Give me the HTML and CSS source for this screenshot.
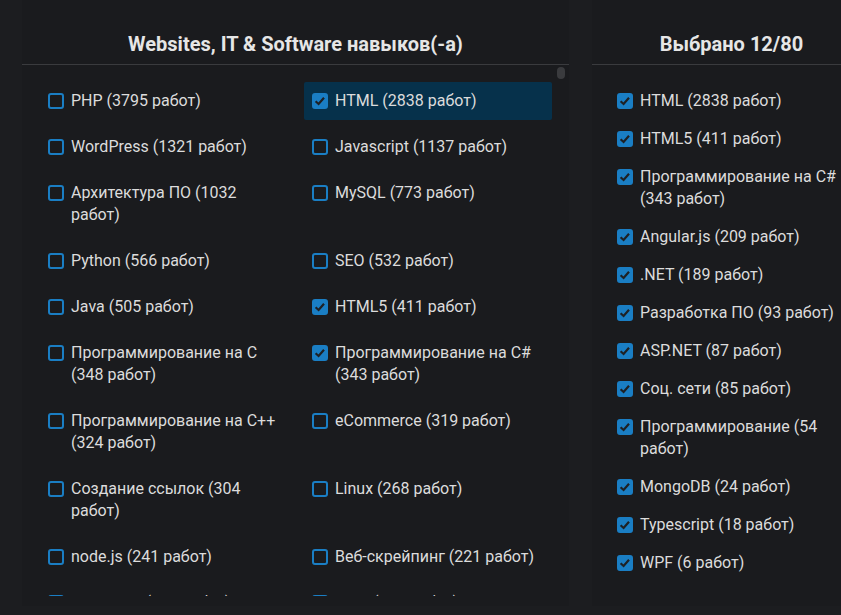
FILE: index.html
```html
<!DOCTYPE html>
<html lang="ru">
<head>
  <meta charset="UTF-8">
  <title>Навыки</title>
  <link rel="stylesheet" href="styles.css">
</head>
<body>
  <div class="page">
    <section class="panel panel-skills">
      <h2 class="panel-title">Websites, IT &amp; Software навыков(-а)</h2>
      <span class="scroll-thumb"></span>
      <div class="skills">
        <label class="skill"><span class="box"></span><span>PHP (3795 работ)</span></label>
        <label class="skill active"><span class="box checked"></span><span>HTML (2838 работ)</span></label>
        <label class="skill"><span class="box"></span><span>WordPress (1321 работ)</span></label>
        <label class="skill"><span class="box"></span><span>Javascript (1137 работ)</span></label>
        <label class="skill"><span class="box"></span><span>Архитектура ПО (1032 работ)</span></label>
        <label class="skill"><span class="box"></span><span>MySQL (773 работ)</span></label>
        <label class="skill"><span class="box"></span><span>Python (566 работ)</span></label>
        <label class="skill"><span class="box"></span><span>SEO (532 работ)</span></label>
        <label class="skill"><span class="box"></span><span>Java (505 работ)</span></label>
        <label class="skill"><span class="box checked"></span><span>HTML5 (411 работ)</span></label>
        <label class="skill"><span class="box"></span><span>Программирование на C (348 работ)</span></label>
        <label class="skill"><span class="box checked"></span><span>Программирование на C# (343 работ)</span></label>
        <label class="skill"><span class="box"></span><span>Программирование на C++ (324 работ)</span></label>
        <label class="skill"><span class="box"></span><span>eCommerce (319 работ)</span></label>
        <label class="skill"><span class="box"></span><span>Создание ссылок (304 работ)</span></label>
        <label class="skill"><span class="box"></span><span>Linux (268 работ)</span></label>
        <label class="skill"><span class="box"></span><span>node.js (241 работ)</span></label>
        <label class="skill"><span class="box"></span><span>Веб-скрейпинг (221 работ)</span></label>
        <label class="skill"><span class="box checked"></span><span>Angular.js (209 работ)</span></label>
        <label class="skill"><span class="box checked"></span><span>.NET (189 работ)</span></label>
      </div>
    </section>

    <section class="panel panel-picked">
      <h2 class="panel-title">Выбрано 12/80</h2>
      <div class="picked">
        <label class="pick"><span class="box checked"></span><span>HTML (2838 работ)</span></label>
        <label class="pick"><span class="box checked"></span><span>HTML5 (411 работ)</span></label>
        <label class="pick"><span class="box checked"></span><span>Программирование на C# (343 работ)</span></label>
        <label class="pick"><span class="box checked"></span><span>Angular.js (209 работ)</span></label>
        <label class="pick"><span class="box checked"></span><span>.NET (189 работ)</span></label>
        <label class="pick"><span class="box checked"></span><span>Разработка ПО (93 работ)</span></label>
        <label class="pick"><span class="box checked"></span><span>ASP.NET (87 работ)</span></label>
        <label class="pick"><span class="box checked"></span><span>Соц. сети (85 работ)</span></label>
        <label class="pick"><span class="box checked"></span><span>Программирование (54 работ)</span></label>
        <label class="pick"><span class="box checked"></span><span>MongoDB (24 работ)</span></label>
        <label class="pick"><span class="box checked"></span><span>Typescript (18 работ)</span></label>
        <label class="pick"><span class="box checked"></span><span>WPF (6 работ)</span></label>
      </div>
    </section>
  </div>
</body>
</html>
```

FILE: styles.css
```css
*{margin: 0; padding: 0; box-sizing: border-box;}
html, body{height: 100%;}
body{
  background-color: #1c1d20;
  color: #dcdcdc;
  font-family: Roboto, "Noto Sans", sans-serif;
  font-size: 16px;
  overflow: hidden;
}

.page{
  display: flex;
  gap: 23px;
  padding-left: 22px;
}

/* панели */
.panel{
  flex-shrink: 0;
  background-color: #1a1b1e;
  position: relative;
  height: 606px;
}
.panel-skills{ width: 547px; }
.panel-picked{ width: 279px; }

.panel-title{
  height: 65px;
  padding-top: 31px;
  font-size: 20px;
  line-height: 26px;
  font-weight: bold;
  color: #e6e6e6;
  text-align: center;
  border-bottom: 1px solid #3a3b3e;
}

.scroll-thumb{
  position: absolute;
  top: 67px;
  left: 535px;
  width: 8px;
  height: 12px;
  border-radius: 4px;
  background-color: #3a3b3e;
}

/* список навыков */
.skills{
  display: grid;
  grid-template-columns: 248px 248px;
  column-gap: 16px;
  row-gap: 8px;
  align-content: start;
  height: 531px;
  overflow: hidden;
  padding: 17px 0 0 18px;
}
.skill,
.pick{
  display: flex;
  gap: 7px;
  line-height: 22px;
}
.skill{
  padding: 8px 8px;
  border-radius: 2px;
}
.skill.active{ background-color: #06314b; }

.picked{
  display: flex;
  flex-direction: column;
  gap: 16px;
  padding: 25px 22px 0 25px;
}

/* чекбоксы */
.box{
  flex-shrink: 0;
  width: 16px;
  height: 16px;
  margin-top: 3px;
  border: 2px solid #1a7ec4;
  border-radius: 3px;
}
.box.checked{
  background-color: #1a7ec4;
  background-image: url("data:image/svg+xml;utf8,<svg xmlns='http://www.w3.org/2000/svg' viewBox='0 0 16 16'><polyline points='3.6,8.2 6.6,11 12,4.8' fill='none' stroke='%231e2125' stroke-width='2.2'/></svg>");
  background-size: 16px 16px;
  background-position: -2px -2px;
}
```
